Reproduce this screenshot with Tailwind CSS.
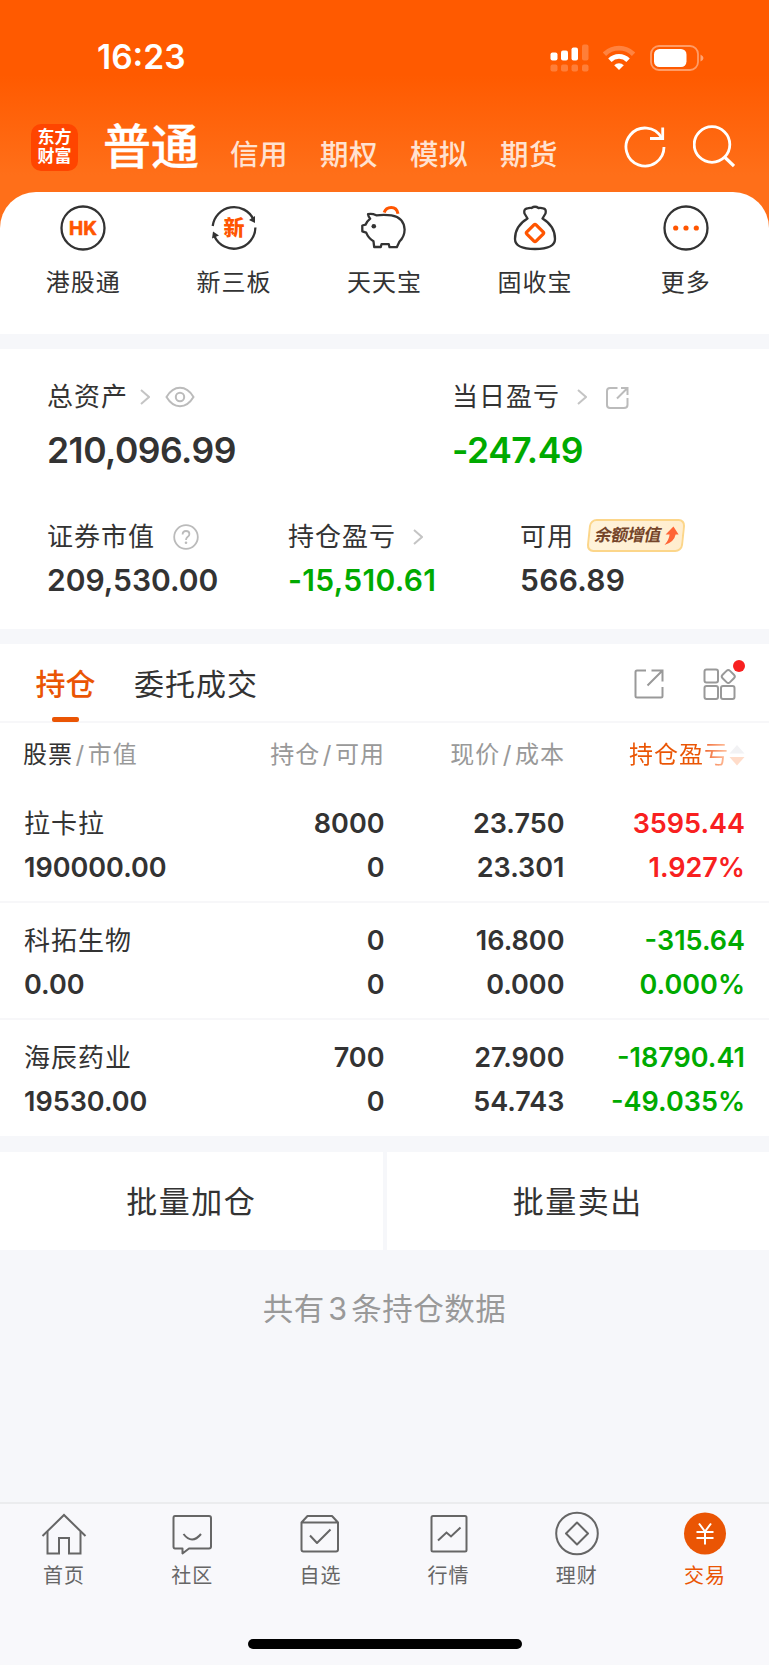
<!DOCTYPE html>
<html lang="zh-CN">
<head>
    <meta charset="UTF-8">
    <meta name="viewport" content="width=device-width, initial-scale=1.0">
    <title>交易</title>
    <script src="https://cdn.jsdelivr.net/npm/@tailwindcss/browser@4"></script>
</head>
<body class="bg-[#f6f7fa] font-['Inter','Noto_Sans_CJK_SC',sans-serif] text-[#333] w-[769px] h-[1665px] overflow-hidden flex flex-col">
    <!-- Header -->
    <header class="h-[236px] shrink-0 -mb-11 bg-[linear-gradient(180deg,#ff5a00_0px,#ff5a00_75px,#ff6f19_175px,#ff6f19_200px)] text-white">
        <!-- Status bar -->
        <div class="h-[115px] pl-[97px] pr-[65px] flex items-center justify-between">
            <span class="text-[33.5px] font-semibold leading-none">16:23</span>
            <div class="flex items-center">
                <svg class="w-[39px] h-[28px] mr-[14px]" viewBox="0 0 39 28" fill="#fff">
                    <rect x="0.5" y="8.5" width="7" height="8" rx="2"/>
                    <rect x="11" y="6.5" width="7" height="10" rx="2"/>
                    <rect x="21.5" y="3.5" width="6.5" height="13" rx="2"/>
                    <g opacity=".22">
                        <rect x="32" y="0.5" width="6.5" height="16" rx="2"/>
                        <rect x="0.5" y="20.5" width="7" height="7" rx="2"/>
                        <rect x="11" y="20.5" width="7" height="7" rx="2"/>
                        <rect x="21.5" y="20.5" width="6.5" height="7" rx="2"/>
                        <rect x="32" y="20.5" width="6.5" height="7" rx="2"/>
                    </g>
                </svg>
                <svg class="w-[32px] h-[26px] mr-[15px]" viewBox="0 0 32 26" fill="none" stroke="#fff" stroke-width="4.8">
                    <path d="M1.4 9.2 A20.5 20.5 0 0 1 30.6 9.2" opacity=".25"/>
                    <path d="M6.9 15.2 A12.8 12.8 0 0 1 25.1 15.2"/>
                    <path d="M16 25 L11.2 20.2 A6.8 6.8 0 0 1 20.8 20.2 Z" fill="#fff" stroke="none"/>
                </svg>
                <svg class="w-[54px] h-[26px]" viewBox="0 0 54 26" fill="none">
                    <rect x="1" y="1" width="47" height="24" rx="8" stroke="#fff" stroke-opacity=".4" stroke-width="1.8"/>
                    <rect x="4" y="4" width="32.5" height="18" rx="5.5" fill="#fff"/>
                    <path d="M50.5 9.5 Q53.5 11 53.5 13 Q53.5 15 50.5 16.5 Z" fill="#fff" fill-opacity=".45"/>
                </svg>
            </div>
        </div>
        <!-- Account tabs -->
        <div class="h-[64px] pl-[31px] pr-[34px] flex items-center">
            <div class="w-[47px] h-[47px] rounded-[10px] bg-[#ff4500] font-bold text-[17px] leading-[19.5px] text-center flex items-center justify-center">东方<br>财富</div>
            <div class="ml-[25px] w-[97px] text-[48px] font-medium leading-[56px] whitespace-nowrap [-webkit-text-stroke:0.3px_#fff]">普通</div>
            <div class="ml-[30px] pt-[15px] flex gap-[32px] text-[28.5px] font-medium leading-[36px] text-[#ffe2d1] tracking-[0.5px]">
                <span>信用</span>
                <span>期权</span>
                <span>模拟</span>
                <span>期货</span>
            </div>
            <svg class="w-[42px] h-[44px] ml-auto" viewBox="0 0 42 44" fill="none" stroke="#fff" stroke-width="2.8">
                <path d="M40 22 A19 19 0 1 1 37.5 12.6"/>
                <path d="M38.7 2.5 V13.5 H26"/>
            </svg>
            <svg class="w-[42px] h-[44px] ml-[27px]" viewBox="0 0 42 44" fill="none" stroke="#fff" stroke-width="2.8">
                <circle cx="19" cy="19.5" r="17.8"/>
                <path d="M31.5 32 L41 41" stroke-width="3.2"/>
            </svg>
        </div>
    </header>

    <!-- Shortcuts -->
    <section class="h-[142px] shrink-0 bg-white rounded-t-[36px] px-[8px] pt-[13px] flex">
        <div class="flex-1 flex flex-col items-center">
            <svg class="w-[46px] h-[46px]" viewBox="0 0 46 46">
                <circle cx="23" cy="23" r="21.5" fill="none" stroke="#333" stroke-width="2.3"/>
                <text x="23" y="30" text-anchor="middle" font-size="19" font-weight="700" fill="#ff5500" stroke="#ff5500" stroke-width=".6" stroke-linejoin="round">HK</text>
            </svg>
            <span class="mt-[13.5px] text-[24px] leading-[36px] tracking-[1px]">港股通</span>
        </div>
        <div class="flex-1 flex flex-col items-center">
            <svg class="w-[46px] h-[46px]" viewBox="0 0 46 46">
                <g fill="none" stroke="#333" stroke-width="2.3">
                    <path d="M1.7 21 A21.5 21.5 0 0 1 42.5 14.5"/>
                    <path d="M44.4 22.5 A21.5 21.5 0 0 1 3.5 31.5"/>
                </g>
                <path d="M38 15 L44 11 L44 18 Z M2 26.5 L1 33.5 L8 30.5 Z" fill="#333"/>
                <text x="23" y="30" text-anchor="middle" font-size="21" font-weight="900" fill="#ff5500">新</text>
            </svg>
            <span class="mt-[13.5px] text-[24px] leading-[36px] tracking-[1px]">新三板</span>
        </div>
        <div class="flex-1 flex flex-col items-center">
            <svg class="w-[46px] h-[46px]" viewBox="0 0 46 46" fill="none" stroke="#333" stroke-width="2.3" stroke-linejoin="round" stroke-linecap="round">
                <path d="M15.2 10.3 Q11 8.3 7 9.2 Q7.5 12 9.2 13.7 Q5.8 16.5 4.5 19.7 L1.3 20.5 V26.3 L5.2 27.7 Q7.5 33.5 12.5 36.3 L13.2 42 H19.8 L20.5 39.2 H27.8 L28.5 42.2 H35.8 L38.5 36.5 Q43.6 31.5 43.6 24.5 Q43 12.5 30.5 10.3 Q23 9.3 15.2 10.3 Z"/>
                <circle cx="12.8" cy="21.2" r="2.3" fill="#333" stroke="none"/>
                <path d="M23.2 7.5 Q24.8 2.5 30.2 2.5 Q35.8 2.5 37 8.7" stroke="#ff5500" stroke-width="3" stroke-linecap="butt"/>
            </svg>
            <span class="mt-[13.5px] text-[24px] leading-[36px] tracking-[1px]">天天宝</span>
        </div>
        <div class="flex-1 flex flex-col items-center">
            <svg class="w-[46px] h-[46px]" viewBox="0 0 46 46" fill="none" stroke="#333" stroke-width="2.3" stroke-linejoin="round">
                <path d="M15.5 13.5 L12.5 8.5 Q11.5 4 15 3.5 Q17.500 2.500 19.500 3 Q23 .5 26.500 3 Q29 2.500 31.500 3.500 Q34.500 4 33.500 8.500 L30.500 13.500 Q43 21 43 34 Q43 44 23 44 Q3 44 3 34 Q3 21 15.500 13.500 Z"/>
                <rect x="16.5" y="21.5" width="13" height="13" rx="1.5" transform="rotate(45 23 28)" stroke="#ff5500" stroke-width="3.2"/>
            </svg>
            <span class="mt-[13.5px] text-[24px] leading-[36px] tracking-[1px]">固收宝</span>
        </div>
        <div class="flex-1 flex flex-col items-center">
            <svg class="w-[46px] h-[46px]" viewBox="0 0 46 46">
                <circle cx="23" cy="23" r="21.5" fill="none" stroke="#333" stroke-width="2.3"/>
                <g fill="#ff5500">
                    <circle cx="12.7" cy="23" r="2.6"/>
                    <circle cx="23" cy="23" r="2.6"/>
                    <circle cx="33.3" cy="23" r="2.6"/>
                </g>
            </svg>
            <span class="mt-[13.5px] text-[24px] leading-[36px] tracking-[1px]">更多</span>
        </div>
    </section>

    <!-- Assets -->
    <section class="mt-[15px] h-[280px] shrink-0 bg-white pl-[47px] pt-[30px]">
        <div class="flex">
            <div class="w-[405px]">
                <div class="h-9 flex items-center text-[26px] leading-[36px] tracking-[1px]">
                    总资产
                    <svg class="w-[10px] h-[16px] ml-[12px]" viewBox="0 0 10 16" fill="none" stroke="#c4c4c4" stroke-width="2"><path d="M1 1 L9 8 L1 15"/></svg>
                    <svg class="w-[30px] h-[22px] ml-[15px] -mt-px" viewBox="0 0 30 22" fill="none" stroke="#bbb" stroke-width="2">
                        <path d="M1.5 11 Q7 1.8 15 1.8 Q23 1.8 28.5 11 Q23 20.2 15 20.2 Q7 20.2 1.5 11 Z"/>
                        <circle cx="15" cy="11" r="4.2"/>
                    </svg>
                </div>
                <div class="mt-[14px] text-[35.5px] font-semibold leading-[44px] tracking-[-0.5px]">210,096.99</div>
            </div>
            <div>
                <div class="h-9 flex items-center text-[26px] leading-[36px] tracking-[1px]">
                    当日盈亏
                    <svg class="w-[10px] h-[16px] ml-[17px]" viewBox="0 0 10 16" fill="none" stroke="#c4c4c4" stroke-width="2"><path d="M1 1 L9 8 L1 15"/></svg>
                    <svg class="w-[24px] h-[24px] ml-[18px] mt-px" viewBox="0 0 24 24" fill="none" stroke="#bbb" stroke-width="2">
                        <path d="M12.5 2 H5 Q2 2 2 5 V19 Q2 22 5 22 H19 Q22.5 22 22.5 19 V12"/>
                        <path d="M16 2 H22.500 V9 M22 2.500 L12 12.500"/>
                    </svg>
                </div>
                <div class="mt-[14px] text-[35.5px] font-semibold leading-[44px] tracking-[-0.5px] text-[#0a0]">-247.49</div>
            </div>
        </div>
        <div class="flex mt-[46px]">
            <div class="w-[241px]">
                <div class="h-9 flex items-center text-[26px] leading-[36px] tracking-[1px]">
                    证券市值
                    <svg class="w-[26px] h-[26px] ml-[18px]" viewBox="0 0 26 26" fill="none" stroke="#bbb" stroke-width="1.8">
                        <circle cx="13" cy="13" r="11.8"/>
                        <path d="M9.6 10.6 Q9.6 7 13 7 Q16.4 7 16.4 10 Q16.4 11.8 14.5 13 Q13 14.2 13 16"/>
                        <circle cx="13" cy="18.8" r="1.3" fill="#bbb" stroke="none"/>
                    </svg>
                </div>
                <div class="mt-[7px] text-[30px] font-semibold leading-[36px]">209,530.00</div>
            </div>
            <div class="w-[232px]">
                <div class="h-9 flex items-center text-[26px] leading-[36px] tracking-[1px]">
                    持仓盈亏
                    <svg class="w-[10px] h-[16px] ml-[17px]" viewBox="0 0 10 16" fill="none" stroke="#c4c4c4" stroke-width="2"><path d="M1 1 L9 8 L1 15"/></svg>
                </div>
                <div class="mt-[7px] text-[30px] font-semibold leading-[36px] tracking-[0.3px] text-[#0a0]">-15,510.61</div>
            </div>
            <div>
                <div class="h-9 flex items-center text-[26px] leading-[36px] tracking-[1px]">
                    可用
                    <div class="ml-[14px] -mt-[3px] w-[96px] h-[33px] -skew-x-6 rounded-[7px] border-2 border-[#fcd68a] bg-linear-to-r from-[#fff3da] to-[#ffedcf] flex items-center pl-[5px]">
                        <span class="text-[17px] font-bold leading-none tracking-[-0.5px] text-[#75452a] -skew-x-6">余额增值</span>
                        <svg class="w-[15px] h-[20px] ml-[3px]" viewBox="0 0 15 20"><path d="M8.5 .5 L14.5 8.5 H11.5 Q11 16 1.5 19 Q5.5 14 5.5 8.5 H1.5 Z" fill="#ff6435"/></svg>
                    </div>
                </div>
                <div class="mt-[7px] text-[30px] font-semibold leading-[36px] tracking-[0.3px]">566.89</div>
            </div>
        </div>
    </section>

    <!-- Positions -->
    <section class="mt-[15px] h-[492px] shrink-0 bg-white">
        <div class="h-[79px] border-b-2 border-[#f7f7f9] pl-[35px] pr-[30px] flex">
            <div class="h-[79px] w-[61px] flex flex-col items-center text-[#ea5504]">
                <span class="mt-[20px] h-[40px] text-[30px] font-medium leading-[40px] whitespace-nowrap">持仓</span>
                <span class="mt-[12.5px] w-[27px] h-[5.5px] rounded-[2px] bg-[#ea5504]"></span>
            </div>
            <span class="ml-[38px] mt-[20px] text-[30px] leading-[40px] tracking-[1px]">委托成交</span>
            <svg class="w-[30px] h-[30px] mt-[24.5px] ml-auto" viewBox="0 0 30 30" fill="none" stroke="#999" stroke-width="2">
                <path d="M12 1.5 H3 Q1.5 1.5 1.5 3 V27 Q1.5 28.5 3 28.5 H27 Q28.5 28.5 28.5 27 V18"/>
                <path d="M17.5 1.5 H28.5 V12.5 M28 2 L13.5 16.5"/>
            </svg>
            <div class="relative ml-[39px] mt-[24px]">
                <svg class="w-[36px] h-[32px]" viewBox="0 0 36 32" fill="none" stroke="#999" stroke-width="2">
                    <rect x="1.5" y="1.5" width="13.5" height="13" rx="2"/>
                    <rect x="1.5" y="18" width="13.5" height="13" rx="2"/>
                    <rect x="18" y="18" width="13.5" height="13" rx="2"/>
                    <rect x="20" y="3.2" width="10.5" height="10.5" rx="2.5" transform="rotate(45 25.2 8.5)"/>
                </svg>
                <span class="absolute -top-[8px] left-[30px] w-[12px] h-[12px] rounded-full bg-[#f82020]"></span>
            </div>
        </div>

        <div class="h-[62px] pt-px px-[23px] grid grid-cols-[181px_181px_180px_180px] items-center text-[24px] leading-[36px] tracking-[1px] text-right text-[#999]">
            <div class="text-left"><span class="text-[#333]">股票</span><span class="mx-[2.5px]">/</span>市值</div>
            <div>持仓<span class="mx-[2.5px]">/</span>可用</div>
            <div>现价<span class="mx-[2.5px]">/</span>成本</div>
            <div class="flex items-center justify-end">
                <span class="bg-linear-to-r from-[#ea5504] from-72% to-[#ffc9a8] bg-clip-text text-transparent">持仓盈亏</span>
                <svg class="w-[16px] h-[22px]" viewBox="0 0 16 22"><path d="M8 1 L15.5 9.5 H.5 Z" fill="#f2f2f4"/><path d="M8 21.5 L15.500 13 H.5 Z" fill="#ffdcc9"/></svg>
            </div>
        </div>

        <div class="h-[117.5px] pt-[17px] pl-[24px] border-b-2 border-[#f7f7f9] grid grid-cols-[179.5px_181px_180px_180.5px] auto-rows-[44px] items-center text-[27px] font-semibold leading-[36px] text-right">
            <div class="text-left text-[26px] font-normal tracking-[1px]">拉卡拉</div>
            <div>8000</div>
            <div>23.750</div>
            <div class="text-[#f82020]">3595.44</div>
            <div class="text-left">190000.00</div>
            <div>0</div>
            <div>23.301</div>
            <div class="text-[#f82020]">1.927%</div>
        </div>
        <div class="h-[117px] pt-[16.5px] pl-[24px] border-b-2 border-[#f7f7f9] grid grid-cols-[179.5px_181px_180px_180.5px] auto-rows-[44px] items-center text-[27px] font-semibold leading-[36px] text-right">
            <div class="text-left text-[26px] font-normal tracking-[1px]">科拓生物</div>
            <div>0</div>
            <div>16.800</div>
            <div class="text-[#0a0]">-315.64</div>
            <div class="text-left">0.00</div>
            <div>0</div>
            <div>0.000</div>
            <div class="text-[#0a0]">0.000%</div>
        </div>
        <div class="h-[116px] pt-[16.5px] pl-[24px] grid grid-cols-[179.5px_181px_180px_180.5px] auto-rows-[44px] items-center text-[27px] font-semibold leading-[36px] text-right">
            <div class="text-left text-[26px] font-normal tracking-[1px]">海辰药业</div>
            <div>700</div>
            <div>27.900</div>
            <div class="text-[#0a0]">-18790.41</div>
            <div class="text-left">19530.00</div>
            <div>0</div>
            <div>54.743</div>
            <div class="text-[#0a0]">-49.035%</div>
        </div>
    </section>

    <!-- Batch actions -->
    <section class="mt-[16px] h-[98px] shrink-0 grid grid-cols-2 gap-[4px] text-[31px] tracking-[1.5px]">
        <button class="bg-white pt-[3px]">批量加仓</button>
        <button class="bg-white pt-[3px]">批量卖出</button>
    </section>
    <p class="mt-[39px] text-center text-[30.5px] leading-[40px] tracking-[0.5px] text-[#999]">共有<span class="mx-[3.5px]">3</span>条持仓数据</p>

    <!-- Tab bar -->
    <nav class="mt-auto h-[163px] shrink-0 border-t-2 border-[#ebecee] bg-[#f8f8fb] flex flex-col text-[#666]">
        <div class="flex pt-[7px] text-[20px] leading-[30px] tracking-[1px]">
            <div class="flex-1 flex flex-col items-center">
                <svg class="w-[46px] h-[46px]" viewBox="0 0 46 46" fill="none" stroke="#666" stroke-width="2">
                    <path d="M1.5 25 L23 4 L44.5 25"/>
                    <path d="M6.5 20.5 V42.5 H18 V27 H28 V42.5 H39.5 V20.5"/>
                </svg>
                <span class="mt-[4px]">首页</span>
            </div>
            <div class="flex-1 flex flex-col items-center">
                <svg class="w-[46px] h-[46px]" viewBox="0 0 46 46" fill="none" stroke="#666" stroke-width="2" stroke-linejoin="round">
                    <path d="M6 5 H40 Q42 5 42 7 V35.5 Q42 37.5 40 37.5 H20 L13.5 42.5 V37.5 H6 Q4.5 37.5 4.5 35.5 V7 Q4.5 5 6 5 Z"/>
                    <path d="M14.5 23 Q23 34 32 23"/>
                </svg>
                <span class="mt-[4px]">社区</span>
            </div>
            <div class="flex-1 flex flex-col items-center">
                <svg class="w-[46px] h-[46px]" viewBox="0 0 46 46" fill="none" stroke="#666" stroke-width="2" stroke-linejoin="round">
                    <path d="M10.5 5 H35 L41 11.5 V38.5 Q41 40.5 39 40.5 H6.5 Q4.5 40.5 4.5 38.5 V11.5 Z M4.5 11.5 H41"/>
                    <path d="M13 24.5 L20 32 L33.5 18.5"/>
                </svg>
                <span class="mt-[4px]">自选</span>
            </div>
            <div class="flex-1 flex flex-col items-center">
                <svg class="w-[46px] h-[46px]" viewBox="0 0 46 46" fill="none" stroke="#666" stroke-width="2">
                    <rect x="5.5" y="5" width="35" height="35.5" rx="1.5"/>
                    <path d="M12 29.5 L20.5 21.5 L25 25.5 L34.5 16.5"/>
                </svg>
                <span class="mt-[4px]">行情</span>
            </div>
            <div class="flex-1 flex flex-col items-center">
                <svg class="w-[46px] h-[46px]" viewBox="0 0 46 46" fill="none" stroke="#666" stroke-width="2" stroke-linejoin="round">
                    <circle cx="23" cy="22.5" r="20.8"/>
                    <path d="M23 11.5 L34 22.5 L23 33.5 L12 22.5 Z"/>
                </svg>
                <span class="mt-[4px]">理财</span>
            </div>
            <div class="flex-1 flex flex-col items-center text-[#ea5504]">
                <svg class="w-[46px] h-[46px]" viewBox="0 0 46 46" fill="none" stroke="#fff" stroke-width="2">
                    <circle cx="23" cy="22.5" r="21" fill="#ea5504" stroke="none"/>
                    <path d="M17 12.5 L23 20.5 L29 12.5 M23 20.5 V33.5 M14.5 21 H31.5 M14.5 27 H31.5"/>
                </svg>
                <span class="mt-[4px]">交易</span>
            </div>
        </div>
        <div class="mt-auto mb-[16px] mx-auto w-[274px] h-[10px] rounded-full bg-black"></div>
    </nav>
</body>
</html>
